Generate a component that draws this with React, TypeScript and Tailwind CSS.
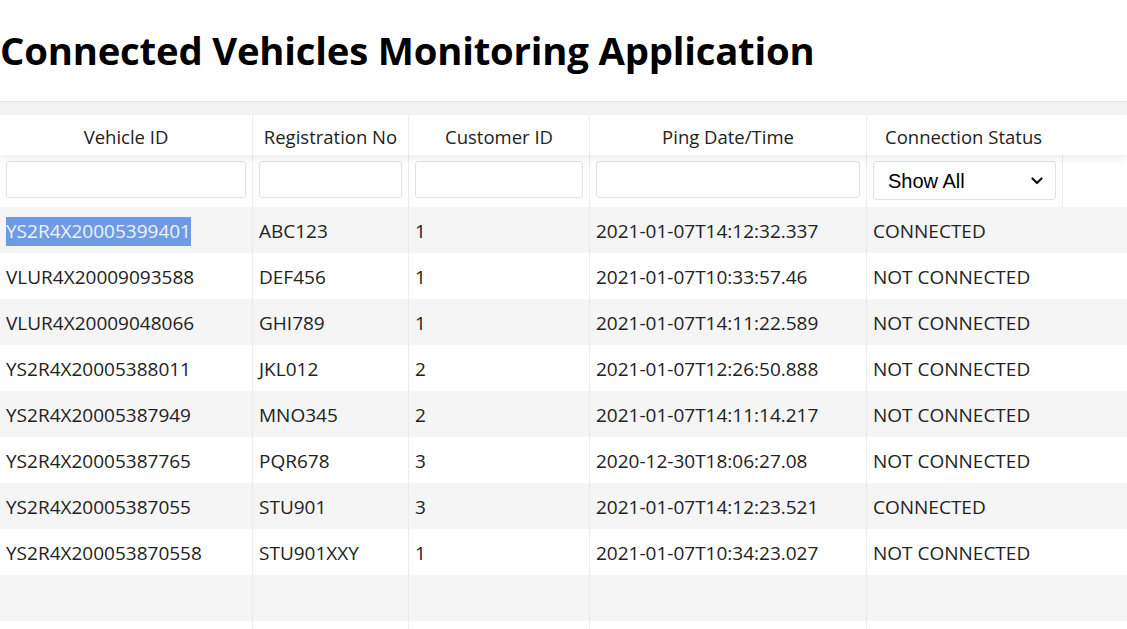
import React from 'react';

const rows = [
  ['YS2R4X20005399401', 'ABC123', '1', '2021-01-07T14:12:32.337', 'CONNECTED'],
  ['VLUR4X20009093588', 'DEF456', '1', '2021-01-07T10:33:57.46', 'NOT CONNECTED'],
  ['VLUR4X20009048066', 'GHI789', '1', '2021-01-07T14:11:22.589', 'NOT CONNECTED'],
  ['YS2R4X20005388011', 'JKL012', '2', '2021-01-07T12:26:50.888', 'NOT CONNECTED'],
  ['YS2R4X20005387949', 'MNO345', '2', '2021-01-07T14:11:14.217', 'NOT CONNECTED'],
  ['YS2R4X20005387765', 'PQR678', '3', '2020-12-30T18:06:27.08', 'NOT CONNECTED'],
  ['YS2R4X20005387055', 'STU901', '3', '2021-01-07T14:12:23.521', 'CONNECTED'],
  ['YS2R4X200053870558', 'STU901XXY', '1', '2021-01-07T10:34:23.027', 'NOT CONNECTED'],
  ['', '', '', '', ''],
  ['', '', '', '', ''],
];

const headers = ['Vehicle ID', 'Registration No', 'Customer ID', 'Ping Date/Time', 'Connection Status'];

const gridCols = 'grid grid-cols-[253px_156px_181px_277px_196px_1fr]';
const cell = 'border-r border-[#ececec]';

export default function App() {
  return (
    <div className="min-h-screen bg-white text-[#222] overflow-hidden" style={{ fontFamily: '"Open Sans", sans-serif' }}>
      <h1 className="h-[101px] flex items-center text-[38.3px] font-bold text-black tracking-[-0.2px]">
        Connected Vehicles Monitoring Application
      </h1>

      <div className="h-[14px] bg-[#f3f3f3] border-t border-[#e4e4e4]" />

      {/* header */}
      <div className={`${gridCols} h-[40px] bg-white relative z-10 shadow-[0_4px_8px_rgba(0,0,0,0.07)] text-[18.5px]`}>
        {headers.map((h, i) => (
          <div key={h} className={`${i < 4 ? cell : ''} flex items-center pt-[3px] ${i === 4 ? 'pl-[18px]' : 'justify-center'}`}>
            {h}
          </div>
        ))}
        <div />
      </div>

      {/* filters */}
      <div className={`${gridCols} h-[52px] bg-white`}>
        <div className={`${cell} px-[6px] pt-[6px]`}>
          <input className="w-full h-[37px] border border-[#e2e2e2] rounded-[3px] bg-white" />
        </div>
        <div className={`${cell} px-[6px] pt-[6px]`}>
          <input className="w-full h-[37px] border border-[#e2e2e2] rounded-[3px] bg-white" />
        </div>
        <div className={`${cell} px-[6px] pt-[6px]`}>
          <input className="w-full h-[37px] border border-[#e2e2e2] rounded-[3px] bg-white" />
        </div>
        <div className={`${cell} px-[6px] pt-[6px]`}>
          <input className="w-full h-[37px] border border-[#e2e2e2] rounded-[3px] bg-white" />
        </div>
        <div className={`${cell} px-[6px] pt-[6px]`}>
          <div className="w-full h-[39px] border border-[#e2e2e2] rounded-[3px] bg-white flex items-center justify-between pl-[14px] pr-[12px] text-[20px] text-black" style={{ fontFamily: '"Liberation Sans", Arial, sans-serif' }}>
            <span>Show All</span>
            <svg width="12" height="8" viewBox="0 0 12 8" fill="none" stroke="#111" strokeWidth="2.2" strokeLinecap="round" strokeLinejoin="round">
              <path d="M1.5 1.5 L6 6 L10.5 1.5" />
            </svg>
          </div>
        </div>
        <div />
      </div>

      {/* rows */}
      {rows.map((r, i) => (
        <div key={i} className={`${gridCols} h-[46px] text-[19px] ${i % 2 === 0 ? 'bg-[#f5f5f5]' : 'bg-white'}`}>
          {r.map((v, j) => (
            <div key={j} className={`${j < 4 ? cell : ''} flex items-center pl-[6px] pt-[3px]`}>
              {i === 0 && j === 0 ? (
                <span className="bg-[#6f9ae4] text-[#eef3fc]">{v}</span>
              ) : (
                v
              )}
            </div>
          ))}
          <div />
        </div>
      ))}
    </div>
  );
}
